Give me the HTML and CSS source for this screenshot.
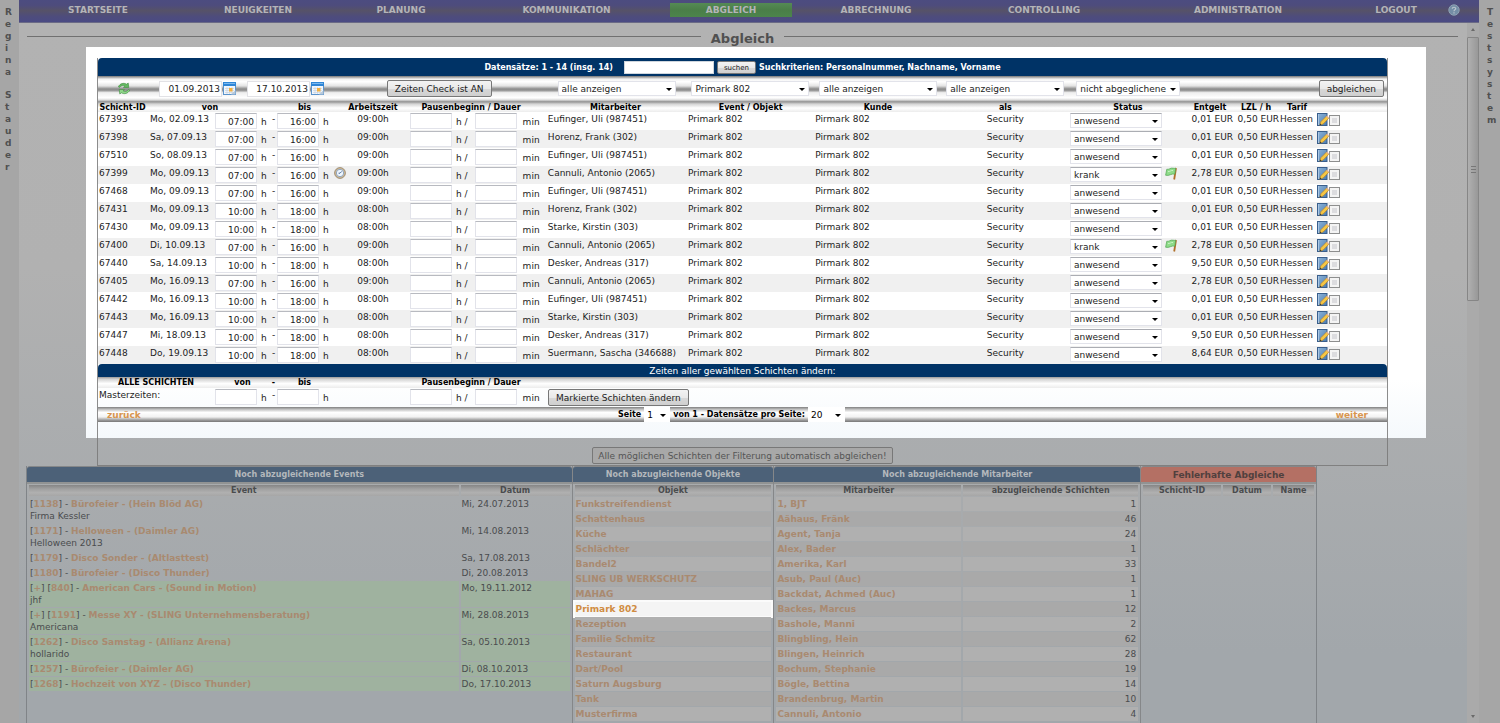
FILE: index.html
```html
<!DOCTYPE html>
<html lang="de">
<head>
<meta charset="utf-8">
<title>Abgleich</title>
<link rel="stylesheet" href="styles.css">
</head>
<body>
<svg class="sprite" aria-hidden="true">
  <defs>
    <linearGradient id="gBook" x1="0" y1="0" x2="1" y2="1"><stop offset="0" stop-color="#8fb4d8"/><stop offset="1" stop-color="#4a7cb0"/></linearGradient>
  </defs>
  <symbol id="edit" viewBox="0 0 12 13">
    <rect x="0.5" y="0.5" width="9.5" height="12" fill="url(#gBook)" stroke="#3a5f8c"/>
    <path d="M1.5 1v11" stroke="#a9c6e3"/>
    <path d="M2.800 12.200l1-3.400 5.600-5.600 2.300 2.100-5.600 5.700z" fill="#f6c643" stroke="#b98222" stroke-width=".6"/>
    <path d="M9.200 3.400l.9-.9 2 2-.9.9z" fill="#e8b49a"/>
    <path d="M2.800 12.200l.5-1.600 1.100 1.100z" fill="#333"/>
  </symbol>
  <symbol id="flag" viewBox="0 0 12 13">
    <path d="M11 1L9.200 12.500" stroke="#b0702a" stroke-width="1.800"/>
    <path d="M1.800 2.200C3.500 3.200 5.500 .4 8 1.200 9 1.500 9.600 1.300 10.600 1.200L9.800 7.200C6.500 6 4.500 9.400 .6 8.200z" fill="#8fdc8a" stroke="#4fa350" stroke-width=".7"/>
    <path d="M3 4.500c2 .4 3-1.500 5-1" fill="none" stroke="#c9f3c4"/>
  </symbol>
  <symbol id="clock" viewBox="0 0 12 12">
    <circle cx="6" cy="6" r="5.400" fill="#d3bd97" stroke="#8d7b62" stroke-width=".8"/>
    <circle cx="6" cy="6" r="3.700" fill="#eef5fc" stroke="#7a96b8" stroke-width=".8"/>
    <path d="M6 6.200L7.800 4.400M6 6.200H4.600" fill="none" stroke="#3d5f8e" stroke-width=".9"/>
  </symbol>
  <symbol id="cal" viewBox="0 0 13 13">
    <rect x=".5" y=".5" width="12" height="12" fill="#f2f7fc" stroke="#5a93cc"/>
    <rect x="0" y="0" width="13" height="4" fill="#2f86d6"/>
    <rect x="1" y="1" width="11" height="1" fill="#7cb8ee"/>
    <path d="M2 6.500h9M2 8.500h9M2 10.500h9M4 5v7M6.500 5v7M9 5v7" stroke="#c2cfdb" stroke-width=".6"/>
    <rect x="6" y="6" width="3.500" height="3.500" fill="#f3b03c"/>
    <path d="M8 12.500L12.500 8v4.500z" fill="#b7c9da"/>
  </symbol>
  <symbol id="refresh" viewBox="0 0 14 13">
    <path d="M1.400 4.800C3 1.200 7 .6 9.600 2.200L11.200 1 11.800 5.600 6.400 5.400 7.800 4C6 3 4 3.500 2.600 5.400z" fill="#62b960" stroke="#3b8a3d" stroke-width=".6"/>
    <path d="M12.600 8.200C11 11.800 7 12.400 4.400 10.800L2.800 12 2.200 7.400 7.600 7.600 6.200 9C8 10 10 9.500 11.400 7.600z" fill="#8ed688" stroke="#3b8a3d" stroke-width=".6"/>
  </symbol>
</svg>

<div class="app">
  <aside class="side"><span>Regina</span><span>Stauder</span></aside>
  <div class="center">
    <nav class="nav">
      <a href="#">STARTSEITE</a><a href="#">NEUIGKEITEN</a><a href="#">PLANUNG</a><a href="#">KOMMUNIKATION</a><a href="#" class="active">ABGLEICH</a><a href="#">ABRECHNUNG</a><a href="#">CONTROLLING</a><a href="#">ADMINISTRATION</a><a href="#">LOGOUT</a>
      <a href="#" aria-label="Hilfe"><svg width="12" height="12" viewBox="0 0 12 12"><circle cx="6" cy="6" r="5.200" fill="#748ea6" stroke="#8fa2b4"/><path d="M4.200 4.700C4.300 2.700 7.800 2.800 7.700 4.700 7.600 5.800 6 5.800 6 7.200M6 8.300v1.200" fill="none" stroke="#bcc6ce" stroke-width="1.200"/></svg></a>
    </nav>
    <div class="body">
      <main class="content">
        <h1 class="title">Abgleich</h1>

        <section class="spot">
          <div class="panel">
            <form class="bar">
              <span>Datensätze: 1 - 14 (insg. 14)</span>
              <input class="search" type="text" aria-label="Suche">
              <button class="btn tiny" type="button">suchen</button>
              <span>Suchkriterien: Personalnummer, Nachname, Vorname</span>
            </form>
            <div class="tools">
              <svg class="refresh" width="14" height="13"><use href="#refresh"/></svg>
              <span class="date"><input type="text" value="01.09.2013" aria-label="Datum von"><svg width="13" height="13"><use href="#cal"/></svg></span>
              <span class="date"><input type="text" value="17.10.2013" aria-label="Datum bis"><svg width="13" height="13"><use href="#cal"/></svg></span>
              <button class="btn" type="button">Zeiten Check ist AN</button>
              <span class="sel filter"><select aria-label="Mitarbeiter"><option>alle anzeigen</option></select></span>
              <span class="sel filter"><select aria-label="Event / Objekt"><option>Primark 802</option></select></span>
              <span class="sel filter"><select aria-label="Kunde"><option>alle anzeigen</option></select></span>
              <span class="sel filter"><select aria-label="als"><option>alle anzeigen</option></select></span>
              <span class="sel filter short"><select aria-label="Status"><option>nicht abgeglichene</option></select></span>
              <button class="btn match" type="button">abgleichen</button>
            </div>
            <table class="shifts">
              <colgroup><col class="w-id"><col class="w-from"><col class="w-dash"><col class="w-to"><col class="w-clock"><col class="w-work"><col class="w-pause"><col class="w-staff"><col><col><col><col class="w-status"><col class="w-pay"><col class="w-pay"><col class="w-tariff"><col class="w-act"></colgroup>
              <thead><tr><th>Schicht-ID</th><th>von</th><th></th><th>bis</th><th></th><th>Arbeitszeit</th><th>Pausenbeginn / Dauer</th><th>Mitarbeiter</th><th>Event / Objekt</th><th>Kunde</th><th>als</th><th>Status</th><th>Entgelt</th><th>LZL / h</th><th>Tarif</th><th></th></tr></thead>
              <tbody id="shifts"></tbody>
            </table>
            <div class="bar thin">Zeiten aller gewählten Schichten ändern:</div>
            <table class="shifts master">
              <colgroup><col class="w-all"><col class="w-to"><col class="w-dash"><col class="w-to"><col class="w-gap"><col class="w-pause"><col></colgroup>
              <thead><tr><th>ALLE SCHICHTEN</th><th>von</th><th>-</th><th>bis</th><th></th><th>Pausenbeginn / Dauer</th><th></th></tr></thead>
              <tbody><tr>
                <td>Masterzeiten:</td>
                <td><div class="line"><input class="time" aria-label="Master von"><span>h</span></div></td>
                <td>-</td>
                <td><div class="line"><input class="time" aria-label="Master bis"><span>h</span></div></td>
                <td></td>
                <td><div class="line pause"><input class="time" aria-label="Master Pausenbeginn"><span>h /</span><input class="time" aria-label="Master Pausendauer"><span>min</span></div></td>
                <td><button class="btn change" type="button">Markierte Schichten ändern</button></td>
              </tr></tbody>
            </table>
            <div class="pager">
              <a href="#">zurück</a>
              <div class="pages"><label for="page">Seite</label><span class="sel p1"><select id="page"><option>1</option></select></span><label for="per">von 1 - Datensätze pro Seite:</label><span class="sel p2"><select id="per"><option>20</option></select></span></div>
              <a href="#">weiter</a>
            </div>
          </div>
        </section>
        <div class="auto"><button class="btn dim" type="button">Alle möglichen Schichten der Filterung automatisch abgleichen!</button></div>

        <section class="lists">
          <div class="list">
            <h2>Noch abzugleichende Events</h2>
            <table><colgroup><col><col class="w-date"></colgroup><thead><tr><th>Event</th><th>Datum</th></tr></thead><tbody id="events"></tbody></table>
          </div>
          <div class="list striped">
            <h2>Noch abzugleichende Objekte</h2>
            <table><thead><tr><th>Objekt</th></tr></thead><tbody id="objects"></tbody></table>
          </div>
          <div class="list striped">
            <h2>Noch abzugleichende Mitarbeiter</h2>
            <table><colgroup><col><col class="w-count"></colgroup><thead><tr><th>Mitarbeiter</th><th>abzugleichende Schichten</th></tr></thead><tbody id="staff"></tbody></table>
          </div>
          <div class="list">
            <h2 class="error">Fehlerhafte Abgleiche</h2>
            <table><colgroup><col><col class="w-err"><col class="w-name"></colgroup><thead><tr><th>Schicht-ID</th><th>Datum</th><th>Name</th></tr></thead></table>
          </div>
        </section>
      </main>
      <div class="scroll" aria-hidden="true"><i class="up"></i><div class="track"><div class="thumb"><i></i></div></div><i class="down"></i></div>
    </div>
  </div>
  <aside class="side right"><span>Testsystem</span></aside>
</div>
<script src="app.js"></script>
</body>
</html>
```

FILE: styles.css
```css
* { box-sizing: border-box; }
html, body { height: 100%; }
body {
  margin: 0;
  overflow: hidden;
  font: 9px/12px "DejaVu Sans", "Noto Sans", sans-serif;
  color: #1c1c1c;
  background: #a8a8a8;
}
a { text-decoration: none; color: inherit; }
input, select, button { font: inherit; color: inherit; margin: 0; }
svg { display: block; flex: none; }
.sprite { position: absolute; width: 0; height: 0; }

.app { display: flex; height: 100vh; }
.side {
  flex: none;
  display: flex;
  flex-direction: column;
  gap: 11px;
  width: 19px;
  padding: 6px 7px 0 5px;
  font-weight: bold;
  color: #505050;
  background: #a6a6a6;
  word-break: break-all;
}
.side.right { width: 21px; padding: 6px 6px 0 8px; }
.center { flex: 1; min-width: 0; display: flex; flex-direction: column; }

.nav {
  flex: none;
  height: 23px;
  display: grid;
  grid-template-columns: 158fr 162fr 124fr 207fr 122fr 168fr 168fr 220fr 96fr 20fr 15fr;
  align-items: start;
  padding-top: 3px;
  font-weight: bold;
  color: #b4b4b8;
  background: linear-gradient(#4c4c80, #4e4c7c 25%, #565268 48%, #4e4c7c 75%, #4a4a84);
  border-bottom: 1px solid #6a6a86;
}
.nav a { height: 14px; display: flex; align-items: center; justify-content: center; }
.nav .active { background: linear-gradient(#558a55, #4a7e48 50%, #4c844c); }

.body {
  flex: 1;
  min-height: 0;
  display: flex;
  background: linear-gradient(#b2b2b2, #b1b1b1 35%, #a2a7ab 90%);
}
.content { flex: 1; min-width: 0; overflow: hidden; }

.title {
  display: flex;
  align-items: center;
  gap: 10px;
  height: 24px;
  margin: 0;
  padding: 7px 9px 0 8px;
  font-size: 13px;
  color: #505050;
}
.title::before, .title::after { content: ""; flex: 1; height: 1px; margin-bottom: 5px; background: #707070; }

.spot {
  margin: 0 41px 0 67px;
  padding: 11px 38px 0 11px;
  background: linear-gradient(#fff 85%, #f5f9fc);
}
.panel { border: solid #8c8c8c; border-width: 0 1px; padding-bottom: 16px; }

.bar {
  display: flex;
  align-items: center;
  justify-content: center;
  gap: 3px;
  height: 18px;
  padding-top: 1px;
  border-radius: 4px 4px 0 0;
  background: #036;
  color: #fff;
  font-size: 8px;
  font-weight: bold;
}
.bar.thin { height: 13px; font-size: 9px; font-weight: normal; }
.search { width: 90px; height: 13px; margin-left: 8px; border: 1px solid #cfd6dd; background: #fff; }

.btn {
  height: 17px;
  padding: 0 7px;
  border: 1px solid #777;
  border-radius: 2px;
  background: linear-gradient(#f3f3f3, #e9e9e9 50%, #d8d8d8 51%, #cfcfcf);
  line-height: 14px;
  white-space: nowrap;
}
.btn.tiny { height: 13px; width: 39px; padding: 0; font-size: 7px; font-weight: normal; line-height: 10px; color: #1c1c1c; }

.tools {
  display: grid;
  grid-template-columns: 61fr 88fr 140fr 171fr 134fr 128fr 127fr 130fr 103fr 207fr;
  align-items: center;
  height: 26px;
  padding-bottom: 1px;
  background: linear-gradient(#777, #f2f2f2 12%, #fff 22%, #e4e4e4 38%, #8a8a8a 50%, #9a9a9a 56%, #eee 64%, #fff 84%, #ddd 92%, #888);
}
.tools > * { justify-self: start; }
.tools .refresh { margin-left: 19px; }
.tools .match { justify-self: end; margin-right: 3px; }
.date { display: flex; align-items: center; gap: 1px; }
.date input { width: 63px; height: 16px; padding: 0 1px; border: 1px solid #e2e2e6; background: #fff; text-align: right; }

.sel { position: relative; display: block; }
.sel::after {
  content: "";
  position: absolute;
  right: 4px;
  top: 50%;
  margin-top: -1px;
  border: 3px solid transparent;
  border-top-color: #000;
  border-bottom: 0;
  pointer-events: none;
}
.sel select {
  display: block;
  appearance: none;
  width: 100%;
  height: 15px;
  padding: 0 3px;
  border: 1px solid #e2e3ea;
  border-top-color: #abadb3;
  border-radius: 0;
  background: #fff;
}
.filter { width: 118px; }
.filter.short { width: 104px; }
.filter select { border-top-color: #e2e3ea; }

.shifts { width: 100%; table-layout: fixed; border-collapse: collapse; }
.shifts th {
  height: 10px;
  padding: 1px 0 0;
  font-size: 8px;
  line-height: 9px;
  white-space: nowrap;
  color: #000;
  background: linear-gradient(#9a9a9a, #d4d4d4 20%, #fff 60%, #ececec);
}
.shifts th:first-child { padding-right: 2px; }
.shifts td { height: 18px; padding: 1px 1px 0; vertical-align: top; white-space: nowrap; line-height: 12px; }
.shifts tbody tr:nth-child(even) { background: #f0f0f0; }
.shifts .mid { text-align: center; }
.shifts .end { text-align: right; padding-right: 0; }
.line { display: flex; align-items: center; height: 16px; }
.line span { padding: 2px 0 0 4px; }
.line .day { width: 65px; margin-top: -4px; padding: 0; }
.time { width: 42px; height: 16px; padding: 2px 2px 0; border: 1px solid #e2e3ea; border-top-color: #b8bac0; background: #fff; text-align: right; }
.pause { padding-left: 11px; }
.pause span + .time { margin-left: 7px; }
.pause .time + span:last-child { padding-left: 6px; }
.status { display: flex; gap: 3px; }
.status .sel { width: 92px; }
.act { display: flex; align-items: center; padding-left: 1px; }
.act input {
  appearance: none;
  width: 11px;
  height: 11px;
  margin-top: 1px;
  border: 1px solid #8e8f8f;
  background: #dcdcdf;
  box-shadow: inset 0 0 0 2px #f4f4f4;
}
.w-id { width: 51px; } .w-from { width: 122px; } .w-dash { width: 5px; } .w-to { width: 57px; }
.w-clock { width: 15px; } .w-work { width: 50px; } .w-pause { width: 146px; } .w-staff { width: 143px; }
.w-status { width: 118px; } .w-pay { width: 46px; } .w-tariff { width: 36px; } .w-act { width: 72px; }
.w-all { width: 116px; } .w-gap { width: 65px; }
.master th { height: 11px; }
.master th, .master th:first-child { padding: 1px 0; }
.master td { height: 19px; }
.change { margin-left: 3px; }

.pager {
  display: grid;
  grid-template-columns: 1fr auto 1fr;
  align-items: center;
  height: 15px;
  padding: 0 19px 0 9px;
  font-weight: bold;
  color: #d8954f;
  background: linear-gradient(#808080, #c8c8c8 18%, #fff 36%, #f2f2f2 66%, #999 88%, #777);
}
.pager a:last-child { justify-self: end; }
.pages { display: flex; align-items: center; gap: 3px; margin-right: 12px; font-size: 8px; color: #000; }
.pages .sel { font-size: 9px; font-weight: normal; }
.pages select { border: 0; }
.p1 { width: 26px; }
.p2 { width: 37px; }

.auto {
  display: flex;
  justify-content: center;
  margin: 0 79px 0 78px;
  height: 28px;
  padding-top: 9px;
  border: 1px solid #808080;
  border-top: 0;
}
.btn.dim { padding: 0 5px; border-color: #787878; background: #a8a8a8; color: #555; }

.lists {
  display: grid;
  grid-template-columns: 545fr 202fr 367fr 176fr;
  margin: 0 150px 0 7px;
  min-height: 400px;
  border-left: 1px solid #808488;
  border-right: 1px solid #808488;
  color: #4a4c4e;
}
.list + .list { border-left: 1px solid #858789; }
.list h2 {
  height: 18px;
  margin: 0;
  padding-top: 1px;
  border-top: 1px solid #858789;
  border-bottom: 2px solid #919393;
  border-radius: 3px 3px 0 0;
  background: #4c6178;
  color: #b4b8bc;
  font-size: 8px;
  line-height: 14px;
  text-align: center;
  white-space: nowrap;
}
.list h2.error { background: #b47064; color: #50403e; font-size: 9px; }
.list table { width: 100%; table-layout: fixed; border-spacing: 2px 1px; }
.list th {
  height: 11px;
  padding: 1px 0 0;
  font-size: 8px;
  line-height: 10px;
  white-space: nowrap;
  background: linear-gradient(#858585, #a0a0a0 35%, #b0b0b0 70%, #a6a6a6);
}
.list td { padding: 1px; vertical-align: top; white-space: nowrap; line-height: 12px; }
.list a { font-weight: bold; color: #a98a70; }
.list .note { display: block; }
.list .done td { background: #9fb29f; }
.striped tbody tr:nth-child(odd) td { background: #b0b0b0; }
.striped tbody tr:nth-child(even) td { background: #a9a9a9; }
.striped tbody .lit:nth-child(even) td { background: #f4f4f4; box-shadow: 0 0 0 2px #fbfbfb; }
.list .lit a { color: #d08c42; }
.list .num { text-align: right; padding-right: 2px; }
.w-date { width: 109px; } .w-count { width: 175px; } .w-err { width: 48px; } .w-name { width: 41px; }

.scroll { flex: none; width: 12px; display: flex; flex-direction: column; align-items: center; background: #aaa; padding: 5px 0; }
.scroll .up { border: 2px solid transparent; border-top: 0; border-bottom: 3px solid #6a6a6a; }
.scroll .down { border: 2px solid transparent; border-bottom: 0; border-top: 3px solid #6a6a6a; }
.track { flex: 1; align-self: stretch; padding-top: 6px; }
.thumb { display: flex; align-items: center; justify-content: center; height: 39%; border: 1px solid #868686; border-radius: 1px; background: linear-gradient(90deg, #b0b0b0, #989898); }
.thumb i { width: 5px; height: 7px; background: repeating-linear-gradient(#777 0 1px, transparent 1px 3px); }
```

FILE: app.js
```js
const shifts = [
  ["67393", "Mo, 02.09.13", 7, "Eufinger, Uli (987451)", "0,01"],
  ["67398", "Sa, 07.09.13", 7, "Horenz, Frank (302)", "0,01"],
  ["67510", "So, 08.09.13", 7, "Eufinger, Uli (987451)", "0,01"],
  ["67399", "Mo, 09.09.13", 7, "Cannuli, Antonio (2065)", "2,78", "krank", true],
  ["67468", "Mo, 09.09.13", 7, "Eufinger, Uli (987451)", "0,01"],
  ["67431", "Mo, 09.09.13", 10, "Horenz, Frank (302)", "0,01"],
  ["67430", "Mo, 09.09.13", 10, "Starke, Kirstin (303)", "0,01"],
  ["67400", "Di, 10.09.13", 7, "Cannuli, Antonio (2065)", "2,78", "krank"],
  ["67440", "Sa, 14.09.13", 10, "Desker, Andreas (317)", "9,50"],
  ["67405", "Mo, 16.09.13", 7, "Cannuli, Antonio (2065)", "2,78"],
  ["67442", "Mo, 16.09.13", 10, "Eufinger, Uli (987451)", "0,01"],
  ["67443", "Mo, 16.09.13", 10, "Starke, Kirstin (303)", "0,01"],
  ["67447", "Mi, 18.09.13", 10, "Desker, Andreas (317)", "9,50"],
  ["67448", "Do, 19.09.13", 10, "Suermann, Sascha (346688)", "8,64"]
];
const icon = (id, w, h) => `<svg width="${w}" height="${h}"><use href="#${id}"/></svg>`;

document.getElementById("shifts").innerHTML = shifts.map(([id, day, start, name, pay, status = "anwesend", clock]) => {
  const early = start === 7;
  return `<tr>
    <td>${id}</td>
    <td><div class="line"><span class="day">${day}</span><input class="time" value="${early ? "07:00" : "10:00"}" aria-label="von ${id}"><span>h</span></div></td>
    <td>-</td>
    <td><div class="line"><input class="time" value="${early ? "16:00" : "18:00"}" aria-label="bis ${id}"><span>h</span></div></td>
    <td>${clock ? icon("clock", 12, 12) : ""}</td>
    <td class="mid">${early ? "09:00h" : "08:00h"}</td>
    <td><div class="line pause"><input class="time" aria-label="Pausenbeginn ${id}"><span>h /</span><input class="time" aria-label="Pausendauer ${id}"><span>min</span></div></td>
    <td>&nbsp;${name}</td>
    <td>Primark 802</td><td>Pirmark 802</td><td class="mid">Security</td>
    <td><div class="status"><span class="sel"><select aria-label="Status ${id}"><option>${status}</option></select></span>${status === "krank" ? icon("flag", 12, 13) : ""}</div></td>
    <td class="end">${pay} EUR</td><td class="end">0,50 EUR</td><td>Hessen</td>
    <td><div class="act">${icon("edit", 12, 13)}<input type="checkbox" aria-label="Auswahl ${id}"></div></td>
  </tr>`;
}).join("");

const events = [
  ["1138", "Bürofeier - (Hein Blöd AG)", "Mi, 24.07.2013", "Firma Kessler"],
  ["1171", "Helloween - (Daimler AG)", "Mi, 14.08.2013", "Helloween 2013"],
  ["1179", "Disco Sonder - (Altlasttest)", "Sa, 17.08.2013"],
  ["1180", "Bürofeier - (Disco Thunder)", "Di, 20.08.2013"],
  ["840", "American Cars - (Sound in Motion)", "Mo, 19.11.2012", "jhf", true, true],
  ["1191", "Messe XY - (SLING Unternehmensberatung)", "Mi, 28.08.2013", "Americana", true, true],
  ["1262", "Disco Samstag - (Allianz Arena)", "Sa, 05.10.2013", "hollarido", true],
  ["1257", "Bürofeier - (Daimler AG)", "Di, 08.10.2013", "", true],
  ["1268", "Hochzeit von XYZ - (Disco Thunder)", "Do, 17.10.2013", "", true]
];
document.getElementById("events").innerHTML = events.map(([id, name, date, note, done, plus]) =>
  `<tr class="${done ? "done" : ""}"><td>${plus ? '[<a href="#">+</a>] ' : ""}[<a href="#">${id}</a>] - <a href="#">${name}</a>${note ? `<span class="note">${note}</span>` : ""}</td><td>${date}</td></tr>`).join("");

const objects = ["Funkstreifendienst", "Schattenhaus", "Küche", "Schlächter", "Bandel2", "SLING UB WERKSCHUTZ", "MAHAG", "Primark 802", "Rezeption", "Familie Schmitz", "Restaurant", "Dart/Pool", "Saturn Augsburg", "Tank", "Musterfirma"];
document.getElementById("objects").innerHTML = objects.map(o =>
  `<tr class="${o === "Primark 802" ? "lit" : ""}"><td><a href="#">${o}</a></td></tr>`).join("");

const staff = [["1, BJT", 1], ["Aähaus, Fränk", 46], ["Agent, Tanja", 24], ["Alex, Bader", 1], ["Amerika, Karl", 33], ["Asub, Paul (Auc)", 1], ["Backdat, Achmed (Auc)", 1], ["Backes, Marcus", 12], ["Bashole, Manni", 2], ["Blingbling, Hein", 62], ["Blingen, Heinrich", 28], ["Bochum, Stephanie", 19], ["Bögle, Bettina", 14], ["Brandenbrug, Martin", 10], ["Cannuli, Antonio", 4]];
document.getElementById("staff").innerHTML = staff.map(([n, c]) =>
  `<tr><td><a href="#">${n}</a></td><td class="num">${c}</td></tr>`).join("");
```
